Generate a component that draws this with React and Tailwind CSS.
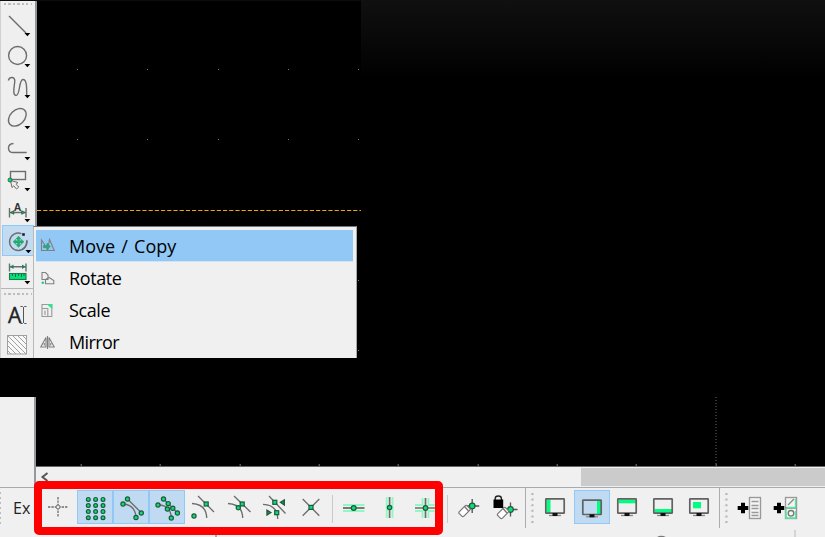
import React from "react";

const G = "#0edb76";
const D = "#1d5a3c";
const S = "#6d6d6d";

function Dot({ x, y, r = 2.1 }) {
  return <circle cx={x} cy={y} r={r} fill={G} stroke={D} strokeWidth="1.2" />;
}

function Square({ x, y }) {
  return <rect x={x - 2} y={y - 2} width="4" height="4" fill={G} stroke={D} strokeWidth="1.2" />;
}

/* ---------- left tool palette: 31px cells starting at y = 8 ---------- */

const tools = [
  { name: "Line", art: <path d="M9 16L26 33" /> },
  { name: "Circle", art: <circle cx="17.6" cy="55.5" r="9" /> },
  {
    name: "Curve",
    art: <path d="M8.3 80.5C9.5 76.5 15 76.5 14.8 81C14.6 85 12 95.5 16 95.5C20.5 95.5 18.5 79.5 23 79.5C27 79.5 26.7 88 26.7 95" />,
  },
  { name: "Ellipse", art: <ellipse cx="17.3" cy="117.3" rx="10.2" ry="7.2" transform="rotate(-45 17.3 117.3)" /> },
  { name: "Polyline", art: <path d="M13.5 143.5C6.8 144 6.8 152.5 13.5 152.5H26.7" /> },
  {
    name: "Select",
    art: (
      <>
        <rect x="10.5" y="171.5" width="15" height="8" />
        <path d="M10.5 180.5L12 187.5L13.8 185.8L16.5 189L18.8 187L16 184.2L18 182.5Z" fill="#eee" strokeWidth="1" />
        <circle cx="10" cy="180" r="2" fill={G} stroke={D} strokeWidth="0.8" />
      </>
    ),
  },
  {
    name: "Dimension",
    art: (
      <>
        <path d="M9.5 208V217.5M26 208V217.5M10 212.5H26" />
        <path d="M10.5 212.5L13.8 210.7V214.3ZM25 212.5L21.7 210.7V214.3Z" fill="#18a860" stroke={D} strokeWidth="0.7" />
        <text x="17.6" y="210.5" textAnchor="middle" fontSize="10.5" fontWeight="bold" fill="#333" stroke="none">A</text>
      </>
    ),
  },
  {
    name: "Modify",
    active: true,
    art: (
      <>
        <path d="M21.5 233.7A8.7 8.7 0 1 0 26.8 240" />
        <path d="M26.8 241Q26.5 247 22 249.5" />
        <rect x="22.2" y="233.2" width="2.6" height="2.6" fill="#222" stroke="none" />
        <path d="M18.5 236L21 239H19.5V240.7H21.3V239.3L24 241.8L21.3 244.3V242.9H19.5V244.6H21L18.5 247.4L16 244.6H17.5V242.9H15.7V244.3L13 241.8L15.7 239.3V240.7H17.5V239H16Z" fill="#20b06d" stroke="#249567" strokeWidth="0.4" />
      </>
    ),
  },
  {
    name: "Measure",
    art: (
      <>
        <path d="M9.5 263.5V271.5M26 263.5V271.5M10 266.7H26" />
        <path d="M10 266.7L13.5 264.5V269ZM25.5 266.7L22 264.5V269Z" fill="#168657" stroke="none" />
        <rect x="9.5" y="273.5" width="16.5" height="6" fill="#00e477" stroke="#277553" strokeWidth="1.1" />
        <path d="M12.5 274V276M15.5 274V277M18.5 274V276M21.5 274V277M24 274V276" stroke="#155a37" strokeWidth="0.9" />
      </>
    ),
  },
];

function Palette() {
  return (
    <div className="flex h-[357px] w-[37px] shrink-0 flex-col border-l border-r-2 border-l-[#d0d0d0] border-r-[#8f979e] bg-[#efefef] pl-px">
      <div className="mt-[2px] ml-[2px] h-[2px] w-[28px] shrink-0 bg-[repeating-linear-gradient(90deg,#bdbdbd_0_2px,transparent_2px_4.5px)]" />
      <div className="mt-[3px] flex flex-col">
        {tools.map((t, i) => (
          <div key={t.name} className={t.active ? "h-[31px] w-[32px] bg-[#c1dcf2] outline outline-1 -outline-offset-1 outline-[#91c8f6]" : "h-[31px] w-[32px]"}>
            <svg className="block font-['Liberation_Sans',sans-serif]" width="32" height="31" viewBox={`2 ${8 + i * 31} 32 31`} fill="none" stroke={S} strokeWidth="1.4">
              {t.art}
              <path d={`M${t.active ? 25.5 : 24.5} ${33 + i * 31}h5.8l-2.9 3.2z`} fill="#000" stroke="none" />
            </svg>
          </div>
        ))}
      </div>
      <div className="mt-[1px] -ml-px h-px w-[34px] bg-[#b5b5b5]" />
      <div className="mt-[4px] ml-[2px] h-[2px] w-[28px] bg-[repeating-linear-gradient(90deg,#bdbdbd_0_2px,transparent_2px_4.5px)]" />
      <div className="flex h-[37px] items-center pt-[3px] pl-[6px]">
        <span className="font-['Open_Sans',sans-serif] text-[21px] leading-none text-[#222] [-webkit-text-stroke:0.4px_#222]">A</span>
        <svg className="-ml-px" width="7" height="20" viewBox="0 0 7 20" fill="none" stroke="#555"><path d="M0.5 1.5H2.5L3.5 2.5L4.5 1.5H6.5M3.5 2V18M0.5 18.5H2.5L3.5 17.5L4.5 18.5H6.5" /></svg>
      </div>
      <svg className="mt-[3px] ml-[5px]" width="21" height="20" viewBox="0 0 21 20" fill="none" stroke="#a0a0a0">
        <rect x="0.5" y="0.5" width="19" height="18.5" fill="#f8f8f8" />
        <path d="M1 1L19 19M1 6L14 19M1 11L9 19M1 16L4 19M6 1L19 14M11 1L19 9M16 1L19 4" />
      </svg>
    </div>
  );
}

/* ---------- modify submenu ---------- */

const menu = [
  {
    label: "Move / Copy",
    spacing: "[word-spacing:1.5px]",
    art: (
      <>
        <path d="M1.5 2V12.5H8.5ZM9.5 1.5L14.3 12.5H7.5Z" />
        <path d="M3.5 7.5H7V5.2L10.3 8.5L7 11.8V9.7H3.5Z" fill="#2aae75" stroke="#398d72" strokeWidth="0.6" />
      </>
    ),
  },
  {
    label: "Rotate",
    spacing: "tracking-[-0.4px]",
    art: (
      <>
        <path d="M2 1.5H5.5L8 4V8.5H2ZM5.5 8.5L9 6.5L13.8 9.5V12.8H5.5Z" />
        <circle cx="2.8" cy="11.7" r="1.3" fill={G} stroke="none" />
      </>
    ),
  },
  {
    label: "Scale",
    spacing: "tracking-[-0.4px]",
    art: (
      <>
        <path d="M2 1.5H11.8V13.5H2ZM2.5 5.5H7.8V13M5 7.5V12" stroke="#999" />
        <path d="M6.5 1H12.3V6.2Z" fill="#35e18d" stroke="none" />
      </>
    ),
  },
  { label: "Mirror", spacing: "tracking-[-0.6px]", art: <path d="M6 2.5V12H0.8ZM9 2.5V12H14.2ZM7.5 1V14M4.3 8V10.5M10.7 8V10.5" /> },
];

function Menu() {
  return (
    <div className="absolute top-[226px] left-[33px] flex h-[132px] w-[324px] flex-col border-t border-r border-l border-t-[#777] border-r-[#aaa] border-l-[#b8b8b8] bg-[#f0f0f0] pt-[3px] pl-[2px]">
      {menu.map((m, i) => (
        <div key={m.label} className={i === 0 ? "flex h-8 w-[317px] shrink-0 items-center border-b border-[#cfe4f6] bg-[#91c8f6]" : "flex h-8 w-[317px] shrink-0 items-center"}>
          <svg className="mr-[14px] ml-[4px] shrink-0" width="15" height="15" viewBox="0 0 15 15" fill="none" stroke="#808080" strokeWidth="1.1">{m.art}</svg>
          <span className={`font-['Open_Sans','Noto_Sans',sans-serif] text-[18px] leading-none whitespace-nowrap text-black ${m.spacing}`}>{m.label}</span>
        </div>
      ))}
    </div>
  );
}

/* ---------- snap toolbar: artwork in window coordinates ---------- */

function Tag({ x, y, dx, dy }) {
  return (
    <>
      <path d={`M${dx - 6} ${dy}H${dx + 7}M${dx} ${dy - 7}V${dy + 7}`} stroke="#555" />
      <Dot x={dx} y={dy} r={2.8} />
      <rect x={x - 5.5} y={y - 3.2} width="11" height="6.4" rx="1.5" transform={`rotate(-45 ${x} ${y})`} fill="#fff" stroke="#777" strokeWidth="1.2" />
      <path d={`M${x} ${y - 4.5}L${x + 4} ${y}`} stroke="#777" />
    </>
  );
}

function Monitor({ x, y, px, py, pw, ph }) {
  return (
    <>
      <rect x={x + px} y={y + py} width={pw} height={ph} fill="#00ff80" stroke="none" />
      <rect x={x + 0.8} y={y + 0.8} width="18.4" height="14.4" rx="0.5" stroke="#626262" strokeWidth="1.7" />
      <path d={`M${x + 4} ${y + 17.5}H${x + 16}`} stroke="#888" strokeWidth="1.3" />
      <rect x={x + 7.5} y={y + 15} width="5" height="3" fill="#111" stroke="none" />
    </>
  );
}

function Sheet({ x }) {
  return (
    <>
      <path d={`M${x - 0.3} 508H${x + 10.3}M${x + 5} 502.7V513.3`} stroke="#000" strokeWidth="4" />
      <rect x={x + 11.5} y="497.5" width="11" height="21" fill="#f4f4f4" stroke="#999" />
    </>
  );
}

const snaps = [
  {
    x: 41,
    art: (
      <>
        <path d="M48 507H68M58 497V517" strokeDasharray="2.4 1" strokeWidth="1.3" />
        <circle cx="58" cy="507" r="2" fill="#eee" strokeWidth="1" />
      </>
    ),
  },
  { x: 77, on: true, art: [499.4, 505.5, 511.6, 517.7].flatMap((y) => [88.3, 95.6, 103].map((x) => <Dot key={`${x}-${y}`} x={x} y={y} r={1.9} />)) },
  {
    x: 113,
    on: true,
    art: (
      <>
        <path d="M127.5 499L141.5 513M123 504C131 504.5 135.5 509 136 517.5" />
        <Dot x={127.5} y={499} /><Dot x={123} y={504} /><Dot x={136} y={517.5} /><Dot x={141.3} y={513} />
      </>
    ),
  },
  {
    x: 149,
    on: true,
    art: (
      <>
        <path d="M163.5 499L177.5 513M158 505C166 505 171 509 171.3 518" />
        <Dot x={163.5} y={499} /><Dot x={158} y={505} /><Dot x={168.2} y={503.6} /><Dot x={167.4} y={509} /><Dot x={172.8} y={508.3} /><Dot x={177.4} y={513} /><Dot x={171.3} y={518} />
      </>
    ),
  },
  {
    x: 185,
    art: (
      <>
        <path d="M198 496L214 512M192 503.5C202 504 206.5 509 206.7 518" />
        <Square x={206.2} y={504} /><Dot x={194} y={516} />
      </>
    ),
  },
  {
    x: 221,
    art: (
      <>
        <path d="M234 496L250.5 512M228 503.5C238 504 242.5 509 242.7 518" />
        <Square x={242.2} y={504} /><Dot x={238.3} y={507.7} />
      </>
    ),
  },
  {
    x: 257,
    art: (
      <>
        <path d="M269 496L285.5 513.5M263 504.3C273 504.5 277.5 510 277.7 519" />
        <Square x={274.8} y={502.3} /><Square x={276.7} y={512.7} />
        <path d="M280.5 502.3L284.3 500V505ZM270.8 512.6L267 510.2V515Z" fill="#159d5c" stroke={D} />
      </>
    ),
  },
  { x: 293, art: <><path d="M302.7 499L319.3 515.7M319.3 499L302.7 515.7" /><Square x={311} y={507.4} /></> },
  { sep: true },
  {
    x: 336,
    art: (
      <>
        <path d="M343 505H364.5M343 511H364.5" stroke="#8dfac1" strokeWidth="1.8" /><path d="M343 508H364.5" strokeWidth="1.8" /><Dot x={353.7} y={508} r={2.4} />
      </>
    ),
  },
  {
    x: 372,
    art: (
      <>
        <path d="M386.7 497V518M392.5 497V518" stroke="#8dfac1" strokeWidth="1.8" /><path d="M389.6 497V518" strokeWidth="1.7" /><Dot x={389.6} y={507.5} r={2.2} />
      </>
    ),
  },
  {
    x: 408,
    art: (
      <>
        <path d="M415 505H422.6V498M428.4 498V505H436M415 511H422.6V518M428.4 518V511H436" stroke="#8dfac1" strokeWidth="1.8" /><path d="M415 508H436M425.5 498V518" strokeWidth="1.7" /><Dot x={425.5} y={508} r={2.3} />
      </>
    ),
  },
  { sep: true },
  { x: 451, art: <Tag x={464.5} y={511} dx={472.2} dy={506} /> },
  {
    x: 487,
    art: (
      <>
        <Tag x={503} y={513} dx={510.5} dy={509.5} />
        <path d="M495.2 500V498.5Q495.2 496 498.3 496Q501.4 496 501.4 498.5V500" stroke="#222" strokeWidth="1.4" />
        <rect x="493.5" y="499.5" width="9.7" height="8.5" fill="#000" stroke="none" />
      </>
    ),
  },
  { grip: true, wide: true },
  { x: 538, art: <Monitor x={545} y={498} px={1.5} py={1.5} pw={4} ph={13.5} /> },
  { x: 574, on: true, art: <Monitor x={582} y={499.3} px={15} py={1.5} pw={4} ph={13.5} /> },
  { x: 610, art: <Monitor x={617} y={498} px={1.5} py={1.5} pw={17.5} ph={3.8} /> },
  { x: 646, art: <Monitor x={653} y={498} px={1.5} py={11} pw={17.5} ph={4} /> },
  { x: 682, art: <Monitor x={689} y={498} px={4} py={4} pw={8} ph={6.3} /> },
  { grip: true },
  { x: 731, art: <><Sheet x={738} /><path d="M751.5 501.5H758.5M751.5 505.5H758.5M751.5 508.5H758.5M751.5 512.5H758.5M751.5 515.5H758.5" stroke="#999" /></> },
  {
    x: 767,
    art: (
      <>
        <Sheet x={774} />
        <path d="M785.5 508H796.5M788 505L794 499" stroke="#888" />
        <path d="M795.5 499V507.5H787M795.5 511V518H786V514" stroke="#54e79e" strokeWidth="1.3" />
        <circle cx="791" cy="513.3" r="2.8" stroke="#777" />
        <path d="M786 508.5V518" stroke="#54e79e" />
      </>
    ),
  },
];

function SnapItem({ item }) {
  if (item.sep) return <div className="mx-[3px] mt-[5px] h-[28px] w-px shrink-0 bg-[#c8c8c8]" />;
  if (item.grip)
    return (
      <div className={item.wide ? "flex h-[40px] w-[15px] shrink-0 -translate-y-[2px] pl-[2px]" : "flex h-[40px] w-[13px] shrink-0 -translate-y-[2px] pl-[1px]"}>
        <div className="h-full w-px bg-[#acacac]" />
        <svg className="mt-[4px] ml-[4px]" width="4" height="32" viewBox="0 0 4 32" fill="none" stroke="#b4b4b4" strokeWidth="2">
          <path d="M2.5 1V31" strokeDasharray="2 3.6" /><path d="M1 2V32" stroke="#cecece" strokeWidth="1" strokeDasharray="1 4.6" />
        </svg>
      </div>
    );
  return (
    <div className={item.on ? "h-[34px] w-9 shrink-0 bg-[#c0dbf1] outline outline-1 -outline-offset-1 outline-[#91c8f6]" : "h-[34px] w-9 shrink-0"}>
      <svg className="block" width="36" height="34" viewBox={`${item.x} 490 36 34`} fill="none" stroke={S} strokeWidth="1.35">{item.art}</svg>
    </div>
  );
}

/* ---------- page ---------- */

export default function App() {
  return (
    <div className="relative flex h-[537px] w-[825px] flex-col overflow-hidden bg-black">
      <div className="flex h-[397px] shrink-0">
        <div className="flex h-[358px] w-[361px] shrink-0 border-t border-[#0c0c0c]">
          <Palette />
          <svg width="324" height="357" viewBox="37 1 324 357" fill="#777">
            {[69, 139].flatMap((y) => [77, 147, 218, 288, 358].map((x) => <rect key={`${x}-${y}`} x={x} y={y} width="1" height="1" />))}
            <rect x="358" y="280" width="1" height="1" />
            <rect x="358" y="350" width="1" height="1" />
            <path d="M37 210.5H361" stroke="#eca70d" strokeDasharray="4.2 2" />
          </svg>
        </div>
        <div className="h-[80px] flex-1 bg-[linear-gradient(180deg,#101010,#000000)]" />
      </div>

      <div className="flex h-[90px] shrink-0">
        <div className="w-[36px] shrink-0 border-r-2 border-r-[#929aa0] bg-[#f0f0f0]" />
        <div className="flex flex-1 flex-col">
          <svg className="block" width="789" height="69" viewBox="36 397 789 69" fill="#555">
            {[81, 160, 240, 319, 398, 478, 557, 636, 716, 795].map((x) => <rect key={x} x={x - 0.5} y="464" width="1.5" height="2" />)}
            <path d="M716 397V466" stroke="#333" strokeWidth="2" strokeDasharray="1 2" />
          </svg>
          <div className="flex h-[21px] items-center justify-between border-t border-[#666] bg-[#f0f0f0]">
            <svg className="ml-[4px]" width="9" height="10" viewBox="0 0 9 10" fill="none" stroke="#555" strokeWidth="2"><path d="M7.5 1L2.5 5L7.5 9" /></svg>
            <div className="h-[18px] w-[244px] bg-[#cbcbcb]" />
          </div>
        </div>
      </div>

      <div className="flex h-[50px] shrink-0 flex-col border-t border-[#a5abb0] bg-[#f0f0f0]">
        <div className="flex h-[42px] shrink-0 pt-[2px]">
          <div className="mt-[2px] h-[32px] w-px bg-[repeating-linear-gradient(180deg,#bbb_0_2px,transparent_2px_5px)]" />
          <div className="flex h-[35px] w-[40px] shrink-0 items-center pl-[12px] font-['Open_Sans','Noto_Sans',sans-serif] text-[16px] leading-none text-[#222]">Ex</div>
          {snaps.map((s, i) => <SnapItem key={i} item={s} />)}
        </div>
        <svg className="block shrink-0" width="825" height="7" viewBox="0 530 825 7" fill="none">
          <path d="M216 535V537" stroke="#aaa" strokeWidth="2" />
          <path d="M657 538Q661 535 666 538" stroke="#777" strokeWidth="1.6" />
          <path d="M795 530V537" stroke="#ccc" strokeWidth="1.5" />
        </svg>
      </div>

      <Menu />
      <div className="absolute top-[481px] left-[34px] h-[54px] w-[409px] rounded-[5px] border-8 border-[#ff0000]" />
    </div>
  );
}
